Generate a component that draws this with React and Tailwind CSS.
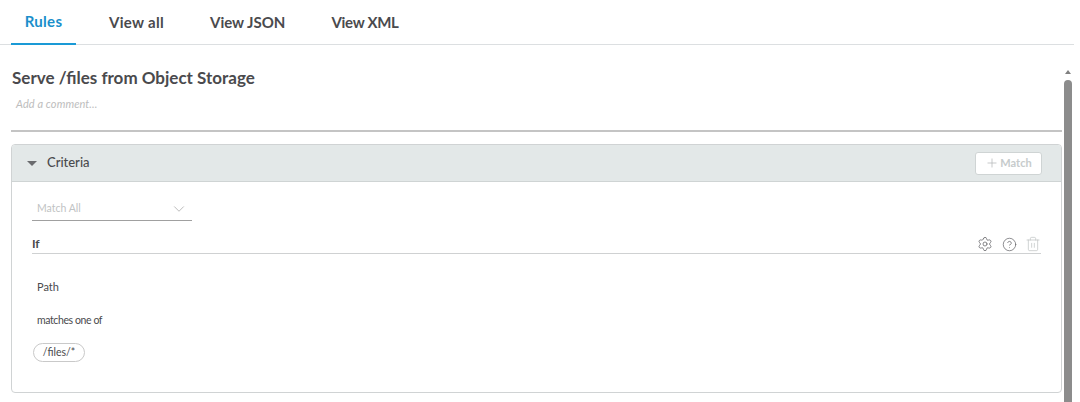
import React from 'react';
import { Settings, CircleHelp, Trash2, ChevronDown, Plus } from 'lucide-react';

const App = () => {
  return (
    <div className="w-[1080px] h-[402px] overflow-hidden bg-white font-['Lato',sans-serif] text-[#4a4a4d]">
      {/* Tabs */}
      <div className="w-[1074px] h-[45px] flex border-b border-[#dcdfe1] pl-[11px]">
        <div className="w-[65px] h-[45px] border-b-2 border-[#1a9ad6] text-[#1a8fcb] text-[15px] tracking-[0.3px] font-bold flex items-center justify-center pb-[1px]">Rules</div>
        <div className="ml-[33px] h-[45px] text-[15px] tracking-[0.3px] font-bold flex items-center pb-[1px]">View all</div>
        <div className="ml-[46px] h-[45px] text-[15px] font-bold flex items-center pb-[1px]">View JSON</div>
        <div className="ml-[46px] h-[45px] text-[15px] tracking-[-0.3px] font-bold flex items-center pb-[1px]">View XML</div>
      </div>

      <div className="flex">
        <div className="w-[1051px] ml-[11px]">
          <h2 className="ml-[1px] mt-[20px] text-[17px] leading-[26px] font-bold">Serve /files from Object Storage</h2>
          <div className="mt-[5px] ml-[5px] text-[11px] tracking-[0.1px] leading-[16px] italic text-[#bdbdbd]">Add a comment...</div>
          <div className="mt-[18px] h-[2px] bg-[#c4c4c4]"></div>

          {/* Criteria panel */}
          <div className="mt-[12px] h-[249px] border border-[#d0d3d4] rounded-[4px] overflow-hidden">
            <div className="h-[37px] bg-[#e3e8e8] border-b border-[#cfd4d4] flex items-center pl-[15px] pr-[19px]">
              <span className="w-0 h-0 border-x-[5px] border-x-transparent border-t-[5px] border-t-[#6a6b6e]"></span>
              <span className="ml-[10px] text-[13px] font-medium">Criteria</span>
              <div className="ml-auto w-[67px] h-[23px] bg-white border border-[#cfd4d4] rounded-[3px] flex items-center justify-center text-[11px] font-bold text-[#c6cbcc]">
                <Plus size={14} strokeWidth={1.3} className="mr-[1px] text-[#b5b8b9]" />
                Match
              </div>
            </div>

            <div className="pl-[20px] pr-[20px]">
              <div className="mt-[15px] w-[160px] h-[24px] border-b border-[#a0a0a0] flex items-center justify-between pl-[5px] pr-[4px]">
                <span className="pt-[1px] text-[10.5px] text-[#bfc3c4]">Match All</span>
                <ChevronDown size={18} strokeWidth={0.9} className="text-[#9a9a9a]" />
              </div>
              <div className="mt-[10px] h-[23px] border-b border-[#cfd1d2] flex items-center justify-between pt-[4px]">
                <span className="text-[12px] font-bold">If</span>
                <div className="flex items-center">
                  <Settings size={16} strokeWidth={1.2} className="text-[#6a6a6d]" />
                  <CircleHelp size={15} strokeWidth={1.2} className="ml-[9px] text-[#6a6a6d]" />
                  <Trash2 size={16} strokeWidth={1.1} className="ml-[8px] text-[#bfc2c3]" />
                </div>
              </div>
              <div className="mt-[25px] ml-[5px] text-[11px] leading-[16px]">Path</div>
              <div className="mt-[17px] ml-[5px] text-[10.5px] tracking-[-0.4px] leading-[16px]">matches one of</div>
              <div className="mt-[15px] ml-[1px] w-[52px] h-[19px] border border-[#c9c9c9] rounded-full flex items-center justify-center text-[10.5px]">/files/*</div>
            </div>
          </div>
        </div>

        {/* Scrollbar */}
        <div className="ml-[2px] w-[8px] h-[357px] flex flex-col items-center">
          <span className="mt-[25px] w-0 h-0 border-x-[3px] border-x-transparent border-b-[4px] border-b-[#808080]"></span>
          <div className="mt-[6px] w-[8px] flex-1 rounded-t-[4px] bg-[#8c8c8c]"></div>
        </div>
      </div>
    </div>
  );
};

export default App;
